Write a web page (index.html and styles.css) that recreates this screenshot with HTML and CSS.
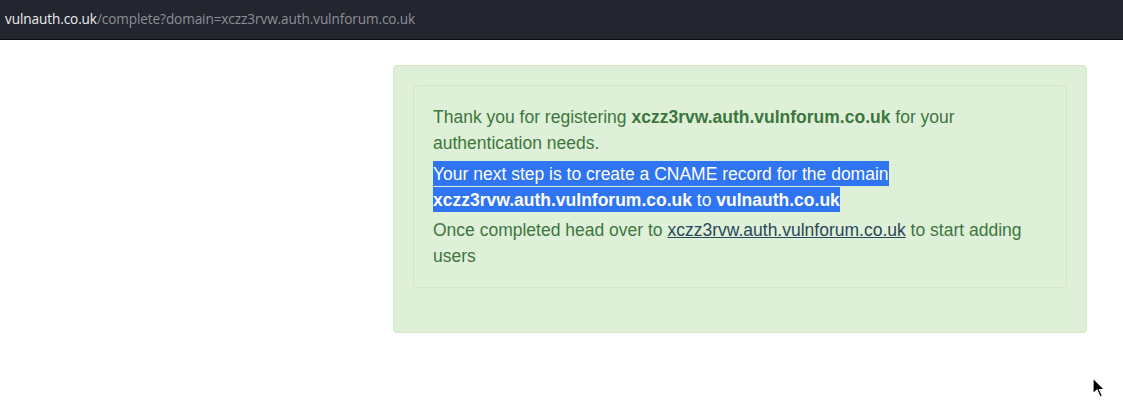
FILE: index.html
```html
<!DOCTYPE html>
<html>
<head>
<meta charset="utf-8">
<link rel="stylesheet" href="styles.css">
</head>
<body>
<div class="urlbar"><span class="host">vulnauth.co.uk</span><span class="path">/complete?domain=xczz3rvw.auth.vulnforum.co.uk</span></div>
<main class="page">
  <div class="alert">
    <div class="well">
      <p>Thank you for registering <b>xczz3rvw.auth.vulnforum.co.uk</b> for your authentication needs.</p>
      <p><span class="sel">Your next step is to create a CNAME record for the domain </span><br><span class="sel"><b>xczz3rvw.auth.vulnforum.co.uk</b> to <b>vulnauth.co.uk</b></span></p>
      <p>Once completed head over to <a href="#">xczz3rvw.auth.vulnforum.co.uk</a> to start adding users</p>
    </div>
  </div>
</main>
<svg class="cursor" width="14" height="22" viewBox="0 0 14 22"><path d="M1 1 L1 17 L5 13 L8 20 L10.5 19 L7.5 12.5 L12.5 12.5 Z" fill="#000" stroke="#fff" stroke-width="1.2"/></svg>
</body>
</html>
```
FILE: styles.css
```css
html, body { margin: 0; padding: 0; background: #fff; }
body { font-family: "Liberation Sans", Arial, sans-serif; position: relative; height: 416px; overflow: hidden; }
.urlbar {
  height: 36px;
  padding-bottom: 3px;
  background: #23252f;
  border-bottom: 1px solid #0c0c10;
  box-sizing: content-box;
  display: flex;
  align-items: center;
  padding-left: 5px;
  font-family: "Open Sans", "DejaVu Sans", sans-serif;
  font-size: 13.6px;
  letter-spacing: -0.1px;
}
.host { color: #ecedf0; }
.path { color: #8d8f98; }
.page { padding: 25px 36px 0 393px; }
.alert {
  background: #dff0d8;
  border: 1px solid #d6e9c6;
  border-radius: 4px;
  padding: 19px 19px 44px 19px;
  color: #3c763d;
}
.well {
  border: 1px solid #d3e6c3;
  border-radius: 4px;
  padding: 19px 19px 13px 19px;
  font-size: 17.5px;
  line-height: 25.7px;
}
.well p { margin: 0 0 5px 0; }
.well b { font-weight: bold; }
.well a { color: #29485a; text-decoration: underline; }
.sel { background: #2f74f0; color: #fff; padding: 2.6px 0; }
.sel b { color: #fff; }
.cursor { position: absolute; left: 1092px; top: 377px; }
```
